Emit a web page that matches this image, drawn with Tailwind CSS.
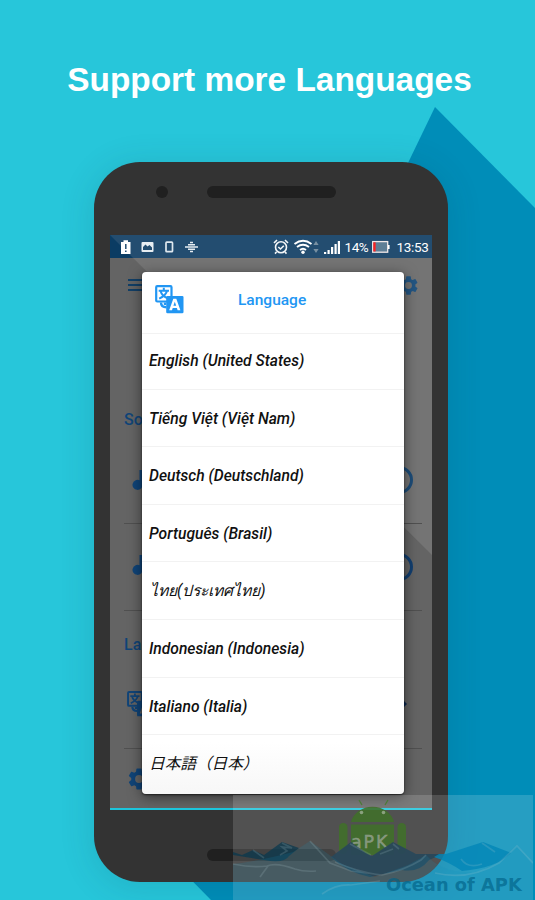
<!DOCTYPE html>
<html lang="en">
<head>
<meta charset="utf-8">
<title>Support more Languages</title>
<script src="https://cdn.jsdelivr.net/npm/@tailwindcss/browser@4"></script>
</head>
<body class="bg-[#27c6da]">
<svg class="hidden">
  <symbol id="gear" viewBox="0 0 24 24"><path fill="currentColor" d="M19.14 12.94c.04-.3.06-.61.06-.94s-.02-.64-.07-.94l2.03-1.58a.5.5 0 0 0 .12-.61l-1.92-3.32a.49.49 0 0 0-.59-.22l-2.39.96a7 7 0 0 0-1.62-.94l-.36-2.54a.48.48 0 0 0-.48-.41h-3.84a.47.47 0 0 0-.47.41l-.36 2.54c-.59.24-1.13.57-1.62.94l-2.39-.96a.48.48 0 0 0-.59.22L2.74 8.87a.47.47 0 0 0 .12.61l2.03 1.58a6 6 0 0 0 0 1.88l-2.03 1.58a.5.5 0 0 0-.12.61l1.92 3.32c.12.22.37.29.59.22l2.39-.96c.5.38 1.03.7 1.62.94l.36 2.54c.05.24.24.41.48.41h3.84c.24 0 .44-.17.47-.41l.36-2.54a7 7 0 0 0 1.62-.94l2.39.96c.22.08.47 0 .59-.22l1.92-3.32a.47.47 0 0 0-.12-.61zM12 15.6a3.6 3.6 0 1 1 0-7.2 3.6 3.6 0 0 1 0 7.2z"/></symbol>
  <symbol id="translate" viewBox="0 0 29 29">
    <path d="M12 16.500H2.2Q1.2 16.500 1.2 15.500V2.2Q1.2 1.2 2.2 1.2H15.5Q16.5 1.2 16.5 2.2V12" fill="none" stroke="currentColor" stroke-width="2.2"/>
    <path d="M8.8 2.7V5M3.7 5.8H14M4.200 13.7C8.8 11.5 11.4 9 12 5.8M5.6 6C6.3 9.2 9 11.8 13.300 13.7" fill="none" stroke="currentColor" stroke-width="2"/>
    <path d="M6 17.500C6 20.5 7.6 22.200 11.500 22.200M10 17.500V20" fill="none" stroke="currentColor" stroke-width="2.400"/>
    <path fill="currentColor" fill-rule="evenodd" d="M12.500 11H27.2Q28.5 11 28.5 12V27Q28.5 28.300 27.2 28.300H12.5Q11.2 28.300 11.2 27V12.300Q11.200 11 12.500 11ZM18.3 13.7 14.2 25.200H17L17.7 23H21.900L22.6 25.200H25.4L21.3 13.7ZM19.8 16.800 21.2 20.800H18.4Z"/>
  </symbol>
  <symbol id="note" viewBox="0 0 24 28"><path fill="currentColor" d="M7.500 4H17V9H10.500V18.500A5 5 0 1 1 7.500 14.300Z"/></symbol>
</svg>
<main class="relative isolate flex h-[900px] w-[535px] flex-col items-center overflow-hidden bg-[#27c6da] font-[Roboto,'Noto_Sans_CJK_JP',sans-serif]">
  <svg class="absolute inset-0 -z-10" width="535" height="900" viewBox="0 0 535 900"><path fill="#008db8" d="M435 107 535 208V900H211L150 838 408 163Z"/></svg>

  <h1 class="mt-[60px] h-10 whitespace-nowrap pl-1 font-['Liberation_Sans',Arial,sans-serif] text-[33.400px] leading-10 font-bold text-white">Support more Languages</h1>

  <section class="mt-[62px] mr-[-7px] flex h-[720px] w-[354px] shrink-0 flex-col rounded-[46px] bg-[#333] shadow-[0_4px_32px_4px_rgba(0,60,70,0.12)]">
    <div class="flex h-[73px] shrink-0 items-center pt-0 pb-[13px] pl-[62px]">
      <i class="size-3 rounded-full bg-[#202020]"></i>
      <i class="ml-[39px] h-3 w-[129px] rounded-full bg-[#202020]"></i>
    </div>

    <div class="relative ml-4 flex h-[575px] w-[322px] shrink-0 flex-col overflow-hidden border-b-2 border-[#1cc5dc] bg-[#646464]">
      <svg class="absolute inset-0" width="322" height="573" viewBox="0 0 322 573"><path fill="#747474" d="M0 0H322V320Z"/></svg>
      <div class="relative flex h-[23px] shrink-0 items-center bg-[#234d70] text-white">
        <svg width="322" height="23" viewBox="0 0 322 23" fill="none">
          <path fill="#0b3c63" d="M0 0 23 23H0Z"/>
          <path fill="#fff" d="M11 7h2.500V5.300h4.500V7h2.500v12H11Z"/><path stroke="#234d70" stroke-width="1.500" d="M15.800 9v5m0 1.500v1.500"/>
          <rect x="31.500" y="7" width="12" height="10" rx="1" fill="#e8eef2"/><path fill="#234d70" d="M33 15V12l2.500-2.500 2 2 2-1.500 2.500 2.500V15Z"/>
          <rect x="56" y="7.200" width="6.500" height="9.500" rx=".8" stroke="#dfe8ee" stroke-width="1.700"/>
          <path stroke="#e8eef2" stroke-width="1.400" d="M80 7.500h3m-5 2.200h7m-10 2.300h13m-10 2.300h7m-5 2.200h3"/>
          <g stroke="#f3f6f8" stroke-width="1.600"><circle cx="171" cy="12.300" r="5.500"/><path d="m168.300 12 2.200 2 3.300-3.300M164 8l3-3m11 3-3-3m-8.500 12-1.500 1.600m10-1.600 1.500 1.600"/></g>
          <g stroke="#fff" stroke-width="1.900"><path d="M184.500 9q8.500-6.500 17 0M187 12q6-4.500 12 0M190 15q3-2.500 6 0"/></g><circle cx="193" cy="17.300" r="1.700" fill="#fff"/>
          <path fill="#7890a2" d="m206 6 2.600 4h-5.200Zm0 12 2.600-4h-5.200Z"/>
          <path fill="#fff" d="M214 17h2.200v2H214zm3.500-2h2.200v4h-2.200zm3.500-3h2.200v7H221zm3.500-3h2.200v10h-2.200zm3.300-3h2.200v13h-2.200z"/>
          <rect x="262.700" y="6.600" width="15" height="10.600" fill="#5e7e95" stroke="#f1e8e8" stroke-width="1.300"/><path fill="#ff2020" d="M263.300 7.300h2.300v9.200h-2.300z"/><path fill="#fff" d="M278 10h1.600v4H278z"/>
        </svg>
        <span class="absolute left-[234.500px] top-[2px] text-[13.500px] leading-5 tracking-[-0.400px]">14%</span>
        <span class="absolute left-[286.500px] top-[2px] text-[13.500px] leading-5 tracking-[-0.300px]">13:53</span>
      </div>

      <div class="relative flex grow flex-col pr-[10px] pl-[14px] text-[#104478]">
        <div class="flex h-[54px] items-center justify-between pl-[4px]">
          <i class="h-[12px] w-5 border-y-2 border-[#123f66] bg-[linear-gradient(#123f66,#123f66)] bg-[length:100%_2px] bg-center bg-no-repeat"></i>
          <svg class="mr-[2px] size-[23px] text-[#235683]"><use href="#gear"/></svg>
        </div>
        <h2 class="mt-[98px] h-5 text-base leading-5 font-medium">So</h2>
        <div class="mt-[12px] flex h-[82px] items-center justify-between border-b border-[#505050] px-[8px] pb-[6px]">
          <svg class="h-[28px] w-6"><use href="#note"/></svg><i class="mr-[1px] size-[28px] rounded-full border-3 border-[#1d4d79]"></i>
        </div>
        <div class="flex h-[87px] items-center justify-between border-b border-[#505050] px-[8px]">
          <svg class="mb-[4px] h-[28px] w-6"><use href="#note"/></svg><i class="mr-[1px] size-[28px] rounded-full border-3 border-[#123f70]"></i>
        </div>
        <h2 class="mt-6 h-5 text-base leading-5 font-medium">La</h2>
        <div class="flex h-[94px] items-center justify-between border-b border-[#505050] pt-[7px] pr-[15px] pl-[3px]">
          <svg class="mb-[2px] size-[26px]"><use href="#translate"/></svg><i class="mb-[2px] border-y-4 border-l-4 border-y-transparent border-l-[#0b2851]"></i>
        </div>
        <svg class="mt-[17px] ml-[2px] size-[26px] shrink-0"><use href="#gear"/></svg>
      </div>

      <div class="absolute top-[37px] left-8 flex h-[522px] w-[262px] flex-col rounded-[4px] bg-linear-to-b from-white from-90% to-[#f7f7f7] shadow-[0_3px_14px_rgba(0,0,0,0.5),0_1px_2px_rgba(0,0,0,0.6)] *:shrink-0">
        <header class="flex h-[62px] items-center border-b border-[#f2f2f2] pb-[6px] pl-[13px] text-[#2196f3]">
          <svg class="size-[29px]"><use href="#translate"/></svg>
          <b class="ml-[54px] pt-[2px] text-[15.500px] font-medium">Language</b>
        </header>
        <ul class="text-[15.650px] font-medium text-[#111] italic *:flex *:h-[57.600px] *:items-center *:border-b *:border-[#f2f2f2] *:pt-[1px] *:pl-[7px] *:whitespace-nowrap">
          <li class="mt-[-2px]">English (United States)</li>
          <li>Tiếng Việt (Việt Nam)</li>
          <li>Deutsch (Deutschland)</li>
          <li>Português (Brasil)</li>
          <li class="pt-0! pl-[8px]! font-normal">ไทย(ประเทศไทย)</li>
          <li>Indonesian (Indonesia)</li>
          <li>Italiano (Italia)</li>
          <li class="border-none! pt-0! font-normal" lang="ja">日本語（日本）</li>
        </ul>
      </div>
    </div>
    <div class="flex grow items-start pt-[39px] pl-[113px]"><i class="h-3 w-[129px] rounded-full bg-[#202020]"></i></div>
  </section>

  <aside class="absolute top-[795px] left-[233px] h-[105px] w-[300px] bg-white/15">
    <svg class="absolute inset-0" width="300" height="105" viewBox="0 0 300 105" fill="none">
      <g fill="#406f29" fill-opacity=".88">
        <path d="M118 27A22 19.500 0 0 1 161 27ZM118 29.500H161V60H118Z"/>
        <rect x="106" y="28" width="8.500" height="31" rx="4.200"/><rect x="164.500" y="28" width="8.500" height="31" rx="4.200"/>
        <path stroke="#4b7b37" stroke-width="1.300" d="m129 10-3-5m26 5 3-5"/>
      </g>
      <circle cx="128.500" cy="17.500" r="1.800" fill="#8ba17f"/><circle cx="150.500" cy="17.500" r="1.800" fill="#8ba17f"/>
    </svg>
    <span class="absolute top-[39px] left-[118px] whitespace-nowrap text-[17.500px] leading-4 tracking-[1.800px] text-[#8d9d86]/90 [-webkit-text-stroke:0.400px_#8d9d86] font-['DejaVu_Sans',sans-serif]">aPK</span>
    <svg class="absolute inset-0" width="300" height="105" viewBox="0 0 300 105" fill="none">
      <path fill="#06384e" fill-opacity=".7" d="M0 57 9 60 20 55 31 60 49 47 66 53 56 61Q51 69 31 65L0 60Z"/>
      <path fill="#29485a" fill-opacity=".95" d="M98 62 118 47 133 58 139 61 160 47 183 59H210L196 65Q186 78 169 75L137 82Q113 77 98 62Z"/>
      <path fill="#0386b6" fill-opacity=".8" d="M206 59H213L250 47 278 58Q264 73 229 76Q216 67 201 62Z"/>
      <path fill="#1090bd" fill-opacity=".16" d="M0 69Q26 66 60 57L77 46 109 69 142 82 175 70 193 60Q209 77 233 77C253 80 260 66 284 51L300 70V105H0Z"/>
      <g stroke="#afcbd4" stroke-opacity=".18" stroke-width="1.700">
        <path d="M0 69Q20 73 34 71Q43 67 62 74 71 77 83 76M35 71 27 82M49 48 59 53 49 52 54 56 47 60M20 55 31 63M77 46 97 68 118 76 149 80Q172 75 188 65L193 60M102 67Q125 77 147 80M89 99Q103 89 118 90L147 86"/>
        <path d="M117 49 138 60M160 49 166 54M147 59 160 54M202 78Q235 86 266 68L284 51 300 68M228 64Q235 74 249 69M249 48 262 57"/>
      </g>
    </svg>
    <span class="absolute top-[78.500px] left-[153px] whitespace-nowrap font-['DejaVu_Sans',sans-serif] text-[17.850px] leading-[22px] font-bold text-[#006086]/65">Ocean of APK</span>
  </aside>
</main>
</body>
</html>
